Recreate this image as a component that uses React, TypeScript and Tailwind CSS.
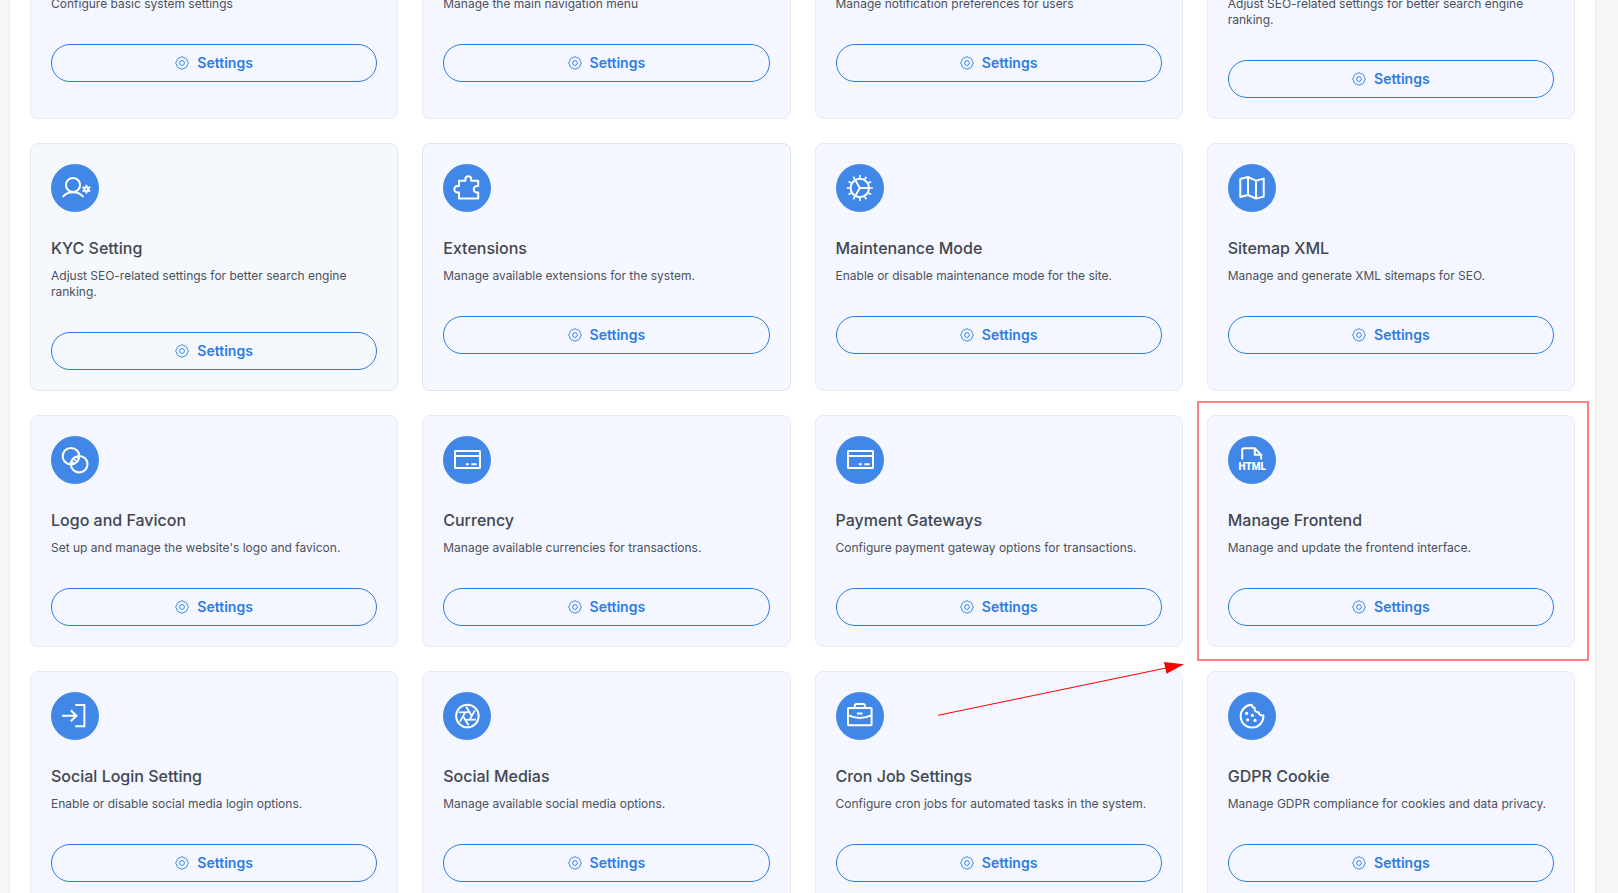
import type { ReactNode } from "react";
import { clsx } from "clsx";

type Tone = "default" | "fading" | "hovered";

type Setting = {
  title?: string;
  icon?: ReactNode;
  description: string;
  tone?: Tone;
  overlay?: ReactNode;
};

const TEETH = [0, 30, 60, 90, 120, 150, 180, 210, 240, 270, 300, 330];
const SIXTHS = [0, 60, 120, 180, 240, 300];

/** All glyphs are drawn on the 48px badge, so coordinates are badge pixels. */
function Glyph({ children }: { children: ReactNode }) {
  return (
    <svg
      viewBox="0 0 48 48"
      className="h-12 w-12"
      fill="none"
      stroke="#fff"
      strokeWidth="2"
      aria-hidden
    >
      {children}
    </svg>
  );
}

function UserCogIcon() {
  return (
    <Glyph>
      <circle cx="22" cy="21" r="7.1" />
      <path d="M11.7 33C14 30 17.8 28.2 22 28.2S30 30 32.4 33" />
      <circle cx="35.4" cy="25.2" r="1.9" />
      {SIXTHS.map((a) => (
        <path key={a} d="M35.4 23v-2.2" strokeWidth="2" transform={`rotate(${a} 35.4 25.2)`} />
      ))}
    </Glyph>
  );
}

function PuzzleIcon() {
  return (
    <Glyph>
      <path
        strokeLinejoin="round"
        d="M16 16.8h6.4v-1.6a2.9 2.9 0 0 1 5.8 0v1.6h7v5.2h-1.2a3.3 3.3 0 0 0 0 6.6h1.2v6H16v-6h-1.4a3.3 3.3 0 0 1 0-6.6H16z"
      />
    </Glyph>
  );
}

function CogIcon() {
  return (
    <Glyph>
      <circle cx="23.8" cy="24" r="9.2" />
      {TEETH.map((a) => (
        <path key={a} d="M23.8 14.5V11" strokeWidth="1.6" transform={`rotate(${a} 23.8 24)`} />
      ))}
      <path d="M33 24h-9.2l-4.6-8M23.8 24l-4.6 8" strokeWidth="1.8" />
    </Glyph>
  );
}

function MapIcon() {
  return (
    <Glyph>
      <path
        strokeLinejoin="round"
        d="M12.3 15l7.7-2 8 3.6 7.7-2v18L28 34.6 20 31l-7.7 2zM20 13v18M28 16.6v18"
      />
    </Glyph>
  );
}

function CirclesIcon() {
  return (
    <Glyph>
      <circle cx="20" cy="20.2" r="8.3" />
      <circle cx="28.2" cy="28.2" r="8.3" />
      <path d="M22.4 22.4l3.4 3.4M20.6 25.4l2 2M25.4 20.8l2 2" strokeWidth="1.6" />
    </Glyph>
  );
}

function CardIcon() {
  return (
    <Glyph>
      <rect x="12" y="15" width="25" height="17" rx="0.6" />
      <path d="M12 20h25M22.8 28.3h3M28.4 28.3h5.2" />
    </Glyph>
  );
}

function HtmlFileIcon() {
  return (
    <Glyph>
      <path d="M14.2 23.4V14a1.8 1.8 0 0 1 1.8-1.8h10.8l6.4 6.6v4.6M26.8 12.2v6.6h6.4" />
      <text
        x="24.2"
        y="34"
        textAnchor="middle"
        fontFamily="Roboto, sans-serif"
        fontSize="10"
        fontWeight="900"
        fill="#fff"
        stroke="none"
      >
        HTML
      </text>
    </Glyph>
  );
}

function SignInIcon() {
  return (
    <Glyph>
      <path d="M24.2 13h9.2v21.2h-9.2M11 23.7h14.6M19.8 18.2l5.6 5.5-5.6 5.5" />
    </Glyph>
  );
}

function ShutterIcon() {
  return (
    <Glyph>
      <circle cx="24.4" cy="24" r="11.3" />
      {SIXTHS.map((a) => (
        <path key={a} d="M26.4 20.2L15.8 20.4" strokeWidth="1.8" transform={`rotate(${a} 24.4 24)`} />
      ))}
    </Glyph>
  );
}

function BriefcaseIcon() {
  return (
    <Glyph>
      <rect x="12" y="16" width="23.6" height="17.2" rx="0.6" />
      <path d="M18.8 16v-2.4a1.6 1.6 0 0 1 1.6-1.6h6.8a1.6 1.6 0 0 1 1.6 1.6V16M12 23.2c7 3.6 16.8 3.6 23.8 0M21 21.6h5.4" />
    </Glyph>
  );
}

function CookieIcon() {
  return (
    <Glyph>
      <path
        strokeLinejoin="round"
        d="M23.6 12.8A11.4 11.4 0 1 0 35.4 23.4c-2.6.4-4.6-.8-4.8-3.2-3 .2-4.4-1.6-3.8-4.2-1.8-.2-2.8-1.4-3.2-3.2z"
      />
      <g fill="#fff" stroke="none">
        <circle cx="18.6" cy="21.4" r="1.6" />
        <circle cx="24.4" cy="23.4" r="1.6" />
        <circle cx="19.6" cy="27.8" r="1.6" />
        <circle cx="27" cy="28.4" r="1.6" />
      </g>
    </Glyph>
  );
}

/** Eight soft lobes around a small ring. */
function GearIcon() {
  return (
    <svg
      viewBox="0 0 14 14"
      className="h-[14px] w-[14px]"
      fill="none"
      stroke="currentColor"
      strokeWidth="0.9"
      strokeLinejoin="round"
      aria-hidden
    >
      <path d="M4.97 2.1a2.2 2.2 0 0 1 4.06 0a2.2 2.2 0 0 1 2.87 2.87a2.2 2.2 0 0 1 0 4.06a2.2 2.2 0 0 1-2.87 2.87a2.2 2.2 0 0 1-4.06 0a2.2 2.2 0 0 1-2.87-2.87a2.2 2.2 0 0 1 0-4.06a2.2 2.2 0 0 1 2.87-2.87z" />
      <circle cx="7" cy="7" r="2.4" />
    </svg>
  );
}

function HighlightFrame() {
  return (
    <div className="pointer-events-none absolute -top-[15px] -right-[15px] -bottom-[15px] -left-[11px] border-2 border-[#ff8080]" />
  );
}

function PointerArrow() {
  return (
    <svg
      viewBox="0 0 248 56"
      className="pointer-events-none absolute -top-[11px] left-[121px] z-10 h-[56px] w-[248px]"
      aria-hidden
    >
      <path d="M1 54.3L230 6.8" stroke="#f00" strokeWidth="1" />
      <path d="M247 3.3L227 1l2.5 11.7z" fill="#f00" />
    </svg>
  );
}

const settings: Setting[] = [
  { description: "Configure basic system settings" },
  { description: "Manage the main navigation menu" },
  { description: "Manage notification preferences for users" },
  { description: "Adjust SEO-related settings for better search engine ranking." },
  {
    title: "KYC Setting",
    icon: <UserCogIcon />,
    description: "Adjust SEO-related settings for better search engine ranking.",
    tone: "fading",
  },
  {
    title: "Extensions",
    icon: <PuzzleIcon />,
    description: "Manage available extensions for the system.",
    tone: "hovered",
  },
  {
    title: "Maintenance Mode",
    icon: <CogIcon />,
    description: "Enable or disable maintenance mode for the site.",
  },
  {
    title: "Sitemap XML",
    icon: <MapIcon />,
    description: "Manage and generate XML sitemaps for SEO.",
  },
  {
    title: "Logo and Favicon",
    icon: <CirclesIcon />,
    description: "Set up and manage the website's logo and favicon.",
  },
  {
    title: "Currency",
    icon: <CardIcon />,
    description: "Manage available currencies for transactions.",
  },
  {
    title: "Payment Gateways",
    icon: <CardIcon />,
    description: "Configure payment gateway options for transactions.",
  },
  {
    title: "Manage Frontend",
    icon: <HtmlFileIcon />,
    description: "Manage and update the frontend interface.",
    overlay: <HighlightFrame />,
  },
  {
    title: "Social Login Setting",
    icon: <SignInIcon />,
    description: "Enable or disable social media login options.",
  },
  {
    title: "Social Medias",
    icon: <ShutterIcon />,
    description: "Manage available social media options.",
  },
  {
    title: "Cron Job Settings",
    icon: <BriefcaseIcon />,
    description: "Configure cron jobs for automated tasks in the system.",
    overlay: <PointerArrow />,
  },
  {
    title: "GDPR Cookie",
    icon: <CookieIcon />,
    description: "Manage GDPR compliance for cookies and data privacy.",
  },
];

function SettingCard({ title, icon, description, tone = "default", overlay }: Setting) {
  return (
    <article
      className={clsx(
        "relative rounded-lg border p-5",
        tone === "default" && "border-[#e9ebee] bg-[#f4f7ff]",
        tone === "fading" && "border-[#e4e9ee] bg-[#f5f9fe]",
        tone === "hovered" && "border-[#dce3ed] bg-[#f5f9ff]",
      )}
    >
      {icon ? <div className="mb-6 h-12 w-12 rounded-full bg-[#4187e8]">{icon}</div> : null}
      {title ? <h2 className="mb-2 text-base font-medium text-[#414651]">{title}</h2> : null}
      <p className="mb-8 text-xs text-[#4a505c]">{description}</p>
      <a
        href="#"
        className="flex h-[38px] items-center justify-center gap-2 rounded-full border border-[#2b7be6] text-sm font-semibold text-[#2b7be6]"
      >
        <GearIcon />
        Settings
      </a>
      {overlay}
    </article>
  );
}

export default function App() {
  return (
    <div className="h-screen overflow-hidden bg-[#f5f7f6] pr-[22px] pl-[9px] font-['Inter',sans-serif]">
      <main className="min-h-full border-x border-[#e9ebec] bg-white px-5">
        {/* the list is scrolled: the first row starts just above the fold */}
        <div className="-mt-[25px] grid grid-cols-4 gap-6">
          {settings.map((s, i) => (
            <SettingCard key={i} {...s} />
          ))}
        </div>
      </main>
    </div>
  );
}
